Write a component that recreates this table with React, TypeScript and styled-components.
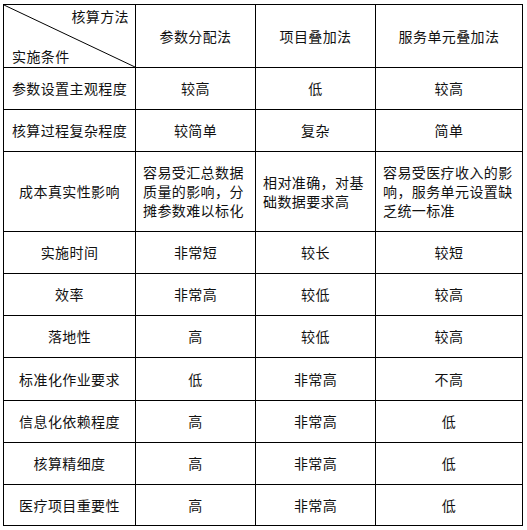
import { Fragment } from 'react';
import styled, { createGlobalStyle } from 'styled-components';

const GlobalStyle = createGlobalStyle`
  html, body {
    margin: 0;
    padding: 0;
    background: #fff;
  }
`;

const Page = styled.div`
  padding: 4px 0 0 3px;
`;

const Grid = styled.div`
  display: grid;
  grid-template-columns: 132px 120px 120px 147px;
  grid-template-rows: 63px 42px 42px 80px 42px 42px 42px 43px 42px 42px 41px;
  width: max-content;
  border-top: 1px solid #000;
  border-left: 1px solid #000;
  font-family: "Noto Sans CJK SC", "Noto Sans", sans-serif;
  font-size: 14px;
  letter-spacing: 0.4px;
  color: #111;
`;

const Cell = styled.div<{ $wrap?: boolean }>`
  box-sizing: border-box;
  border-right: 1px solid #000;
  border-bottom: 1px solid #000;
  display: flex;
  flex-direction: column;
  justify-content: center;
  align-items: ${p => (p.$wrap ? 'flex-start' : 'center')};
  padding: 0 7px;
  line-height: 19px;
  white-space: nowrap;
`;

const CornerCell = styled.div`
  position: relative;
  box-sizing: border-box;
  border-right: 1px solid #000;
  border-bottom: 1px solid #000;
  display: flex;
  flex-direction: column;
  justify-content: space-between;
  padding: 2px 6px 1px 8px;
  line-height: 19px;
`;

const Diagonal = styled.svg`
  position: absolute;
  inset: 0;
  width: 100%;
  height: 100%;
`;

const MethodLabel = styled.span`
  align-self: flex-end;
`;

const ConditionLabel = styled.span`
  align-self: flex-start;
`;

const Line = styled.span`
  display: block;
`;

type Row = { label: string; values: (string | string[])[] };

const methods = ['参数分配法', '项目叠加法', '服务单元叠加法'];

const rows: Row[] = [
  { label: '参数设置主观程度', values: ['较高', '低', '较高'] },
  { label: '核算过程复杂程度', values: ['较简单', '复杂', '简单'] },
  {
    label: '成本真实性影响',
    values: [
      ['容易受汇总数据', '质量的影响，分', '摊参数难以标化'],
      ['相对准确，对基', '础数据要求高'],
      ['容易受医疗收入的影', '响，服务单元设置缺', '乏统一标准'],
    ],
  },
  { label: '实施时间', values: ['非常短', '较长', '较短'] },
  { label: '效率', values: ['非常高', '较低', '较高'] },
  { label: '落地性', values: ['高', '较低', '较高'] },
  { label: '标准化作业要求', values: ['低', '非常高', '不高'] },
  { label: '信息化依赖程度', values: ['高', '非常高', '低'] },
  { label: '核算精细度', values: ['高', '非常高', '低'] },
  { label: '医疗项目重要性', values: ['高', '非常高', '低'] },
];

export default function App() {
  return (
    <Page>
      <GlobalStyle />
      <Grid>
        <CornerCell>
          <Diagonal viewBox="0 0 100 100" preserveAspectRatio="none">
            <line x1="0" y1="0" x2="100" y2="100" stroke="#000" strokeWidth="1" vectorEffect="non-scaling-stroke" />
          </Diagonal>
          <MethodLabel>核算方法</MethodLabel>
          <ConditionLabel>实施条件</ConditionLabel>
        </CornerCell>
        {methods.map(m => (
          <Cell key={m}>{m}</Cell>
        ))}
        {rows.map(row => (
          <Fragment key={row.label}>
            <Cell>{row.label}</Cell>
            {row.values.map((v, i) =>
              Array.isArray(v) ? (
                <Cell key={i} $wrap>
                  {v.map(line => (
                    <Line key={line}>{line}</Line>
                  ))}
                </Cell>
              ) : (
                <Cell key={i}>{v}</Cell>
              )
            )}
          </Fragment>
        ))}
      </Grid>
    </Page>
  );
}
